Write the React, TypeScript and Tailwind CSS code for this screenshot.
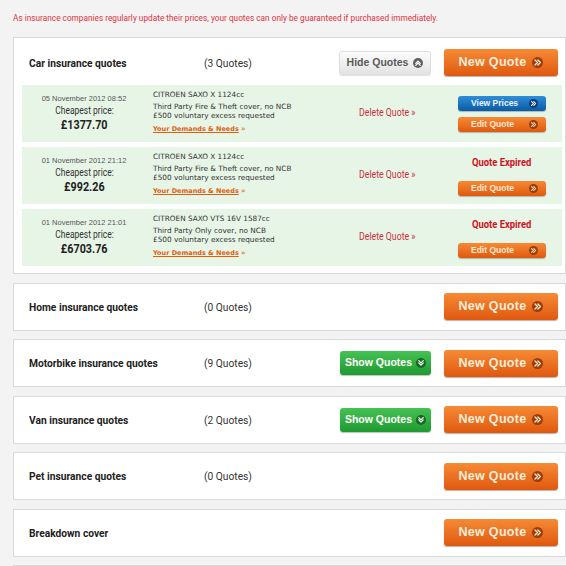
import React from "react";

const ROBOTO = "font-['Roboto',sans-serif]";
const ARIAL = "font-['Liberation_Sans',Arial,sans-serif]";
const DEJAVU = "font-['DejaVu_Sans',Verdana,sans-serif]";

type Dir = "right" | "up" | "down";

const Chevrons = ({ dir, color }: { dir: Dir; color: string }) => {
  const d =
    dir === "right"
      ? "M2.2 2.2 L5 5 L2.2 7.8 M5.4 2.2 L8.2 5 L5.4 7.8"
      : dir === "up"
      ? "M2.2 5.4 L5 2.6 L7.8 5.4 M2.2 8 L5 5.2 L7.8 8"
      : "M2.2 2 L5 4.8 L7.8 2 M2.2 4.8 L5 7.6 L7.8 4.8";
  return (
    <svg viewBox="0 0 10 10" className="h-full w-full">
      <path d={d} fill="none" stroke={color} strokeWidth="1.5" strokeLinecap="round" strokeLinejoin="round" />
    </svg>
  );
};

const NewQuote = () => (
  <button
    className={`flex h-[27px] w-[114px] items-center justify-center gap-[6px] rounded-[3px] bg-linear-to-b from-[#f68a34] to-[#df580d] shadow-[0_1px_1px_rgba(0,0,0,0.3)] ${ARIAL}`}
  >
    <span className="text-[12.5px] font-bold tracking-[0.3px] text-[#fdeedb]">New Quote</span>
    <span className="flex h-[11px] w-[11px] items-center justify-center rounded-full bg-[#9d3c07] p-[1px]">
      <Chevrons dir="right" color="#fde6cf" />
    </span>
  </button>
);

const HideQuotes = () => (
  <button
    className={`flex h-[24px] w-[92px] items-center justify-center gap-[5px] rounded-[3px] border border-[#dedede] bg-linear-to-b from-[#fcfcfc] to-[#e3e3e3] shadow-[0_1px_1px_rgba(0,0,0,0.12)] ${ARIAL}`}
  >
    <span className="text-[10.5px] font-bold text-[#5a5a5a]">Hide Quotes</span>
    <span className="flex h-[10px] w-[10px] items-center justify-center rounded-full bg-[#606060] p-[1px]">
      <Chevrons dir="up" color="#ffffff" />
    </span>
  </button>
);

const ShowQuotes = () => (
  <button
    className={`flex h-[24px] w-[91px] items-center justify-center gap-[4px] rounded-[3px] bg-linear-to-b from-[#45c253] to-[#1e9a31] shadow-[0_1px_1px_rgba(0,0,0,0.25)] ${ARIAL}`}
  >
    <span className="text-[10.5px] font-bold text-white">Show Quotes</span>
    <span className="flex h-[10px] w-[10px] items-center justify-center rounded-full bg-[#146b22] p-[1px]">
      <Chevrons dir="down" color="#ffffff" />
    </span>
  </button>
);

const SmallButton = ({ label, blue }: { label: string; blue?: boolean }) => (
  <button
    className={`flex h-[15px] w-[88px] items-center justify-between rounded-[3px] pl-[13px] pr-[8px] shadow-[0_1px_1px_rgba(0,0,0,0.25)] ${ARIAL} ${
      blue ? "bg-linear-to-b from-[#2f8ed8] to-[#0b5aa5]" : "bg-linear-to-b from-[#f68a34] to-[#df580d]"
    }`}
  >
    <span className={`text-[8.5px] font-bold ${blue ? "text-[#eaf2ff]" : "text-[#fde9d3]"}`}>{label}</span>
    <span
      className={`flex h-[9px] w-[9px] items-center justify-center rounded-full p-[1px] ${
        blue ? "bg-[#0c3d7c]" : "bg-[#9d3c07]"
      }`}
    >
      <Chevrons dir="right" color={blue ? "#ffffff" : "#fde6cf"} />
    </span>
  </button>
);

const carQuotes = [
  {
    date: "05 November 2012 08:52",
    price: "£1377.70",
    car: "CITROEN SAXO X 1124cc",
    cover: "Third Party Fire & Theft cover, no NCB",
    expired: false,
  },
  {
    date: "01 November 2012 21:12",
    price: "£992.26",
    car: "CITROEN SAXO X 1124cc",
    cover: "Third Party Fire & Theft cover, no NCB",
    expired: true,
  },
  {
    date: "01 November 2012 21:01",
    price: "£6703.76",
    car: "CITROEN SAXO VTS 16V 1587cc",
    cover: "Third Party Only cover, no NCB",
    expired: true,
  },
];

const otherTypes = [
  { title: "Home insurance quotes", count: "(0 Quotes)", show: false },
  { title: "Motorbike insurance quotes", count: "(9 Quotes)", show: true },
  { title: "Van insurance quotes", count: "(2 Quotes)", show: true },
  { title: "Pet insurance quotes", count: "(0 Quotes)", show: false },
  { title: "Breakdown cover", count: "", show: false },
];

// the source font is a condensed one, so the Roboto text is narrowed with scale-x
const Header = ({
  title,
  count,
  extra,
  tall,
}: {
  title: string;
  count: string;
  extra?: React.ReactNode;
  tall?: boolean;
}) => (
  <div className={`flex items-center pl-[15px] pr-[7px] ${tall ? "h-[47px] pt-[2px]" : "h-[46px]"} ${ROBOTO}`}>
    <div className="flex w-[175px]">
      <span className="inline-block origin-left scale-x-[0.89] text-[11.5px] font-bold leading-[14px] text-[#222]">
        {title}
      </span>
    </div>
    <span className="inline-block origin-left scale-x-[0.89] text-[11.5px] leading-[14px] text-[#333]">{count}</span>
    <div className="ml-auto flex items-center gap-[13px]">
      {extra}
      <NewQuote />
    </div>
  </div>
);

const QuoteRow = ({ q }: { q: (typeof carQuotes)[number] }) => (
  <div className="grid h-[57px] grid-cols-[124px_7px_206px_99px_88px] bg-[#e7f5e7]">
    <div className={`flex flex-col items-center pt-[9px] text-[#333] ${ROBOTO}`}>
      <span className={`h-[10px] text-[7.5px] leading-[10px] text-[#555] ${ARIAL}`}>{q.date}</span>
      <span className="mt-[1px] inline-block h-[12px] scale-x-[0.85] text-[10px] leading-[12px]">Cheapest price:</span>
      <span className="inline-block h-[15px] scale-x-[0.8] text-[13.5px] font-bold leading-[15px] text-[#222]">
        {q.price}
      </span>
    </div>
    <div />
    <div className={`flex flex-col pt-[5px] text-[7.3px] text-[#333] ${DEJAVU}`}>
      <span className="h-[10px] leading-[10px]">{q.car}</span>
      <span className="mt-[1.5px] leading-[9.5px]">{q.cover}</span>
      <span className="leading-[9.5px]">£500 voluntary excess requested</span>
      <span className="mt-[3.5px] leading-[10px] text-[#e0600f]">
        <span className="text-[6.5px] font-bold underline">Your Demands &amp; Needs</span> »
      </span>
    </div>
    <div className={`flex items-center pb-[3px] ${ROBOTO}`}>
      <span className="inline-block origin-left scale-x-[0.875] text-[10px] text-[#c9323c]">Delete Quote »</span>
    </div>
    <div className="flex flex-col items-center justify-center">
      {q.expired ? (
        <>
          <span
            className={`mb-[11px] inline-block h-[14px] scale-x-[0.855] text-[11px] font-bold leading-[14px] text-[#d0101c] ${ROBOTO}`}
          >
            Quote Expired
          </span>
          <SmallButton label="Edit Quote" />
        </>
      ) : (
        <div className="flex flex-col gap-[6px]">
          <SmallButton label="View Prices" blue />
          <SmallButton label="Edit Quote" />
        </div>
      )}
    </div>
  </div>
);

export default function App() {
  return (
    <div className="h-screen overflow-hidden bg-[#f3f3f3] pl-[13px] pt-[11px]">
      <p className={`flex h-[14px] whitespace-nowrap text-[9.5px] leading-[14px] ${ROBOTO}`}>
        <span className="inline-block origin-left scale-x-[0.87] text-[#e2323c]">
          As insurance companies regularly update their prices, your quotes can only be guaranteed if purchased
          immediately.
        </span>
      </p>
      <div className="mt-[12px] flex w-[553px] flex-col gap-[8.5px]">
        <div className="border border-[#d9d9d9] bg-white">
          <Header title="Car insurance quotes" count="(3 Quotes)" extra={<HideQuotes />} tall />
          <div className="flex flex-col gap-[5px] pb-[7px] pl-[8px] pr-[3px]">
            {carQuotes.map((q, i) => (
              <QuoteRow key={i} q={q} />
            ))}
          </div>
        </div>
        {otherTypes.map((t) => (
          <div key={t.title} className="border border-[#d9d9d9] bg-white">
            <Header title={t.title} count={t.count} extra={t.show ? <ShowQuotes /> : null} />
          </div>
        ))}
        <div className="h-[48px] border border-[#d9d9d9] bg-white" />
      </div>
    </div>
  );
}
